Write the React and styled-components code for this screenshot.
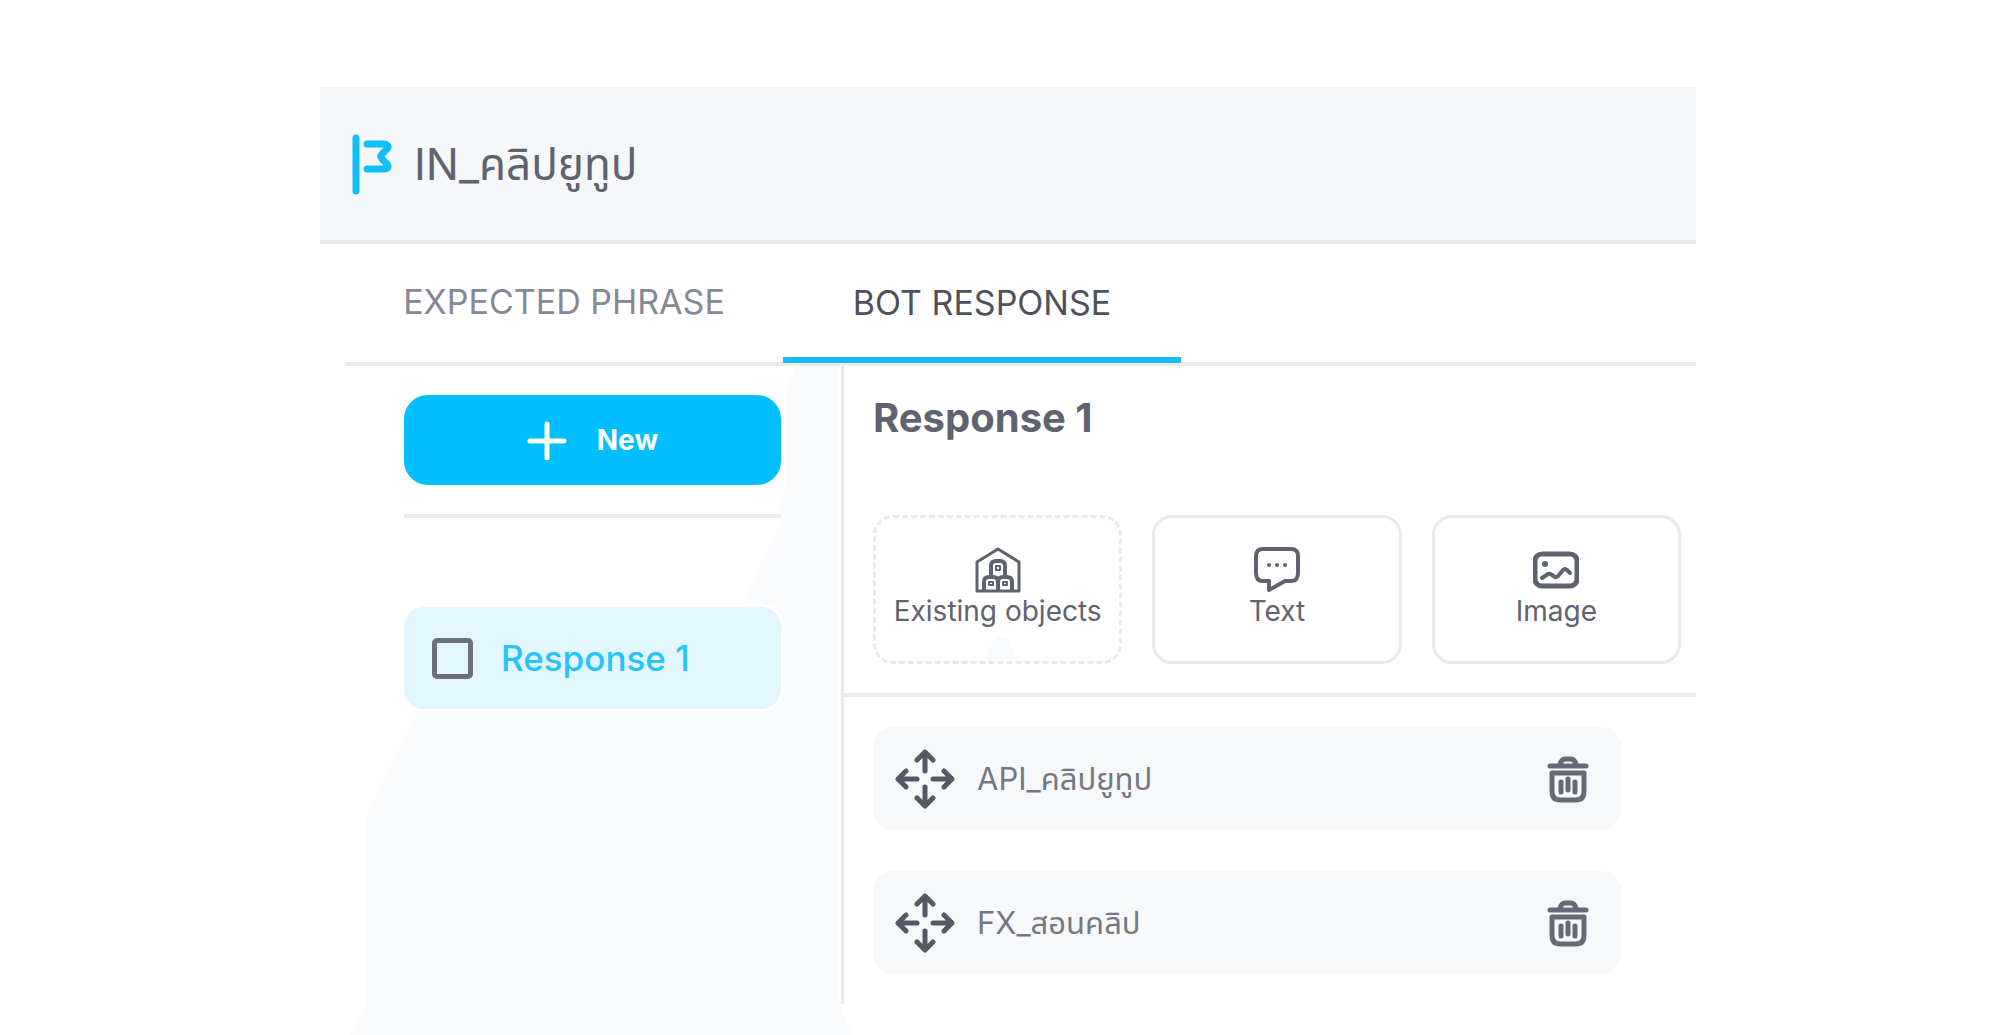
import styled, { createGlobalStyle } from "styled-components";

const actions = [
  { name: "Existing objects", icon: "store", dashed: true },
  { name: "Text", icon: "chat" },
  { name: "Image", icon: "image" },
];

const objects = ["API_คลิปยูทูป", "FX_สอนคลิป"];

const FlagIcon = () => (
  <svg width="44" height="66" viewBox="0 0 44 66" fill="none" stroke="#0fbefb" strokeWidth="7" strokeLinecap="round" strokeLinejoin="round" aria-hidden="true">
    <path d="M6 7V60" />
    <path d="M17 13H33C38 13 39 16 37 18L33 22C30 25 30 26 33 29L37 33C39 36 38 38 33 38H17" />
  </svg>
);

const PlusIcon = () => (
  <svg width="40" height="40" viewBox="0 0 40 40" stroke="#fff" strokeWidth="5" strokeLinecap="round" aria-hidden="true">
    <path d="M20 4V38M3 21H37" />
  </svg>
);

const MoveIcon = () => (
  <svg width="60" height="60" viewBox="0 0 60 60" fill="none" stroke="#555963" strokeWidth="5" strokeLinecap="round" strokeLinejoin="round" aria-hidden="true">
    <path d="M30 22V4M22 11L30 3L38 11" />
    <path d="M30 38V56M22 49L30 57L38 49" />
    <path d="M22 30H4M11 22L3 30L11 38" />
    <path d="M38 30H56M49 22L57 30L49 38" />
  </svg>
);

const TrashIcon = () => (
  <svg width="42" height="48" viewBox="0 0 42 48" fill="none" stroke="#666a76" strokeLinecap="round" strokeLinejoin="round" aria-hidden="true">
    <path d="M3 11H39" strokeWidth="5" />
    <path d="M13 10C14 5 16 4 18 4H24C26 4 28 5 29 10" strokeWidth="5" />
    <path d="M5 18H37V36C37 42 34 45 29 45H13C8 45 5 42 5 36Z" strokeWidth="5" />
    <path d="M14 27V37M21 24V35M28 27V37" strokeWidth="5" />
  </svg>
);

const icons = {
  store: (
    <svg width="46" height="46" viewBox="0 0 46 46" fill="none" stroke="#5f6370" strokeWidth="3" strokeLinejoin="round" aria-hidden="true">
      <path d="M2 44V15L23 2L44 15V44Z" />
      <path d="M16 30V19Q16 14 21 14H25Q30 14 30 19V30" strokeWidth="4" />
      <path d="M9 44V35Q9 30 14 30H18Q23 30 23 35V44M23 44V35Q23 30 28 30H32Q37 30 37 35V44" strokeWidth="4" />
      <path d="M21 19H25V23H21ZM14 35H18V38H14ZM28 35H32V38H28Z" strokeWidth="2" />
    </svg>
  ),
  chat: (
    <svg width="46" height="46" viewBox="0 0 46 46" fill="none" stroke="#5f6370" strokeWidth="4" strokeLinejoin="round" strokeLinecap="round" aria-hidden="true">
      <path d="M9 2H37Q44 2 44 9V26Q44 34 37 34H31L15 43V34H9Q2 34 2 26V9Q2 2 9 2Z" />
      <path d="M15 18H15.1M23 18H23.1M31 18H31.1" />
    </svg>
  ),
  image: (
    <svg width="46" height="46" viewBox="0 0 46 46" fill="none" stroke="#5f6370" strokeWidth="4" strokeLinejoin="round" strokeLinecap="round" aria-hidden="true">
      <rect x="2" y="7" width="42" height="32" rx="7" strokeWidth="5" />
      <path d="M9 31L15 27Q17 26 19 28L22 30Q24 31 26 28L30 23Q32 21 34 23L37 26" />
      <circle cx="12" cy="17" r="2" fill="#5f6370" strokeWidth="2" />
    </svg>
  ),
};

const App = () => {
  return (
    <>
      <GlobalStyle />
      <Page>
        <Header>
          <FlagIcon />
          <Title>IN_คลิปยูทูป</Title>
        </Header>
        <Workspace>
          <Tabs role="tablist">
            <Tab role="tab" aria-selected="false">EXPECTED PHRASE</Tab>
            <Tab role="tab" aria-selected="true" $active>BOT RESPONSE</Tab>
          </Tabs>
          <Columns>
            <Sidebar>
              <Backdrop viewBox="0 0 510 669" aria-hidden="true">
                <path d="M452 0L440 28V126L430 146V152L437 154L397 237V300H100L73 345L21 450V637L5 669H507L494 637V0Z" fill="#fafbfd" />
              </Backdrop>
              <NewButton>
                <PlusIcon />
                New
              </NewButton>
              <Divider />
              <ResponseItem>
                <Checkbox type="checkbox" />
                Response 1
              </ResponseItem>
            </Sidebar>
            <Content>
              <ContentTop>
                <Heading>Response 1</Heading>
                <Actions>
                  {actions.map(({ name, icon, dashed }) => (
                    <Action key={name} $dashed={dashed}>
                      {icons[icon]}
                      {name}
                      {dashed && (
                        <Notch width="34" height="24" viewBox="0 0 34 24" aria-hidden="true">
                          <path d="M11 0H23L34 24H0Z" fill="#f9fafc" />
                        </Notch>
                      )}
                    </Action>
                  ))}
                </Actions>
              </ContentTop>
              <ObjectList>
                {objects.map((name) => (
                  <ObjectRow key={name}>
                    <IconButton aria-label={`Move ${name}`}><MoveIcon /></IconButton>
                    <ObjectName>{name}</ObjectName>
                    <IconButton aria-label={`Delete ${name}`}><TrashIcon /></IconButton>
                  </ObjectRow>
                ))}
              </ObjectList>
            </Content>
          </Columns>
        </Workspace>
      </Page>
    </>
  );
};

export default App;

const GlobalStyle = createGlobalStyle`
  * {
    box-sizing: border-box;
  }
  body {
    margin: 0;
    background: #fff;
    color: #5f6370;
    font-family: Inter, "Noto Sans Thai", "Noto Sans", sans-serif;
  }
  button {
    font-family: inherit;
    color: inherit;
    cursor: pointer;
  }
`;

const Page = styled.main`
  max-width: 1376px;
  margin: 0 auto;
  padding: 87px 0 32px;
`;

const Header = styled.header`
  display: flex;
  align-items: center;
  gap: 20px;
  height: 157px;
  padding: 0 30px;
  background: #f6f7f9;
  border-bottom: 4px solid #e8eaec;
`;

const Title = styled.h1`
  margin: 0;
  font-size: 44px;
  line-height: 60px;
  font-weight: 400;
`;

const Workspace = styled.section`
  margin-left: 25px;
`;

const Tabs = styled.div`
  display: flex;
  height: 122px;
  border-bottom: 4px solid #ebeced;
`;

const Tab = styled.button`
  flex: 0 0 ${({ $active }) => ($active ? "398px" : "438px")};
  margin-bottom: ${({ $active }) => ($active ? "-1px" : "0")};
  padding: 4px 0 0;
  border: 0;
  border-bottom: 6px solid ${({ $active }) => ($active ? "#12bdf8" : "transparent")};
  background: none;
  font-size: 34px;
  line-height: 40px;
  && {
    color: ${({ $active }) => ($active ? "#4d515c" : "#858994")};
  }
`;

const Columns = styled.div`
  display: flex;
  min-height: 637px;
`;

const Sidebar = styled.aside`
  position: relative;
  flex: 0 0 499px;
  padding: 29px 60px 28px 59px;
  border-right: 3px solid #e8eaec;
`;

const Backdrop = styled.svg`
  position: absolute;
  z-index: -1;
  top: 0;
  left: 0;
  width: 510px;
`;

const NewButton = styled.button`
  display: flex;
  align-items: center;
  justify-content: center;
  gap: 30px;
  width: 100%;
  height: 90px;
  border: 0;
  border-radius: 24px;
  background: #00bfff;
  font-size: 28px;
  font-weight: 700;
  && {
    color: #fff;
  }
`;

const Divider = styled.hr`
  height: 4px;
  margin: 29px 0 89px;
  border: 0;
  background: #ebeced;
`;

const ResponseItem = styled.label`
  display: flex;
  align-items: center;
  gap: 28px;
  height: 102px;
  padding: 0 28px;
  border-radius: 20px;
  background: #e1f6fe;
  box-shadow: 0 0 0 3px #fff;
  color: #28c3fa;
  font-size: 35px;
  font-weight: 500;
`;

const Checkbox = styled.input`
  appearance: none;
  width: 41px;
  height: 41px;
  margin: 0;
  border: 5px solid #6b6f7b;
  border-radius: 5px;
`;

const Content = styled.div`
  flex: 1;
  min-width: 0;
`;

const ContentTop = styled.div`
  padding: 28px 15px 29px 29px;
  border-bottom: 4px solid #ebeced;
`;

const Heading = styled.h2`
  margin: 0 0 73px;
  font-size: 40px;
  line-height: 48px;
  font-weight: 700;
`;

const Actions = styled.div`
  display: grid;
  grid-template-columns: repeat(3, 1fr);
  gap: 30px;
`;

const Action = styled.button`
  position: relative;
  display: flex;
  flex-direction: column;
  align-items: center;
  height: 149px;
  padding: 29px 0 0;
  border: 3px ${({ $dashed }) => ($dashed ? "dashed" : "solid")} #e8eaec;
  border-radius: 20px;
  background: #fff;
  font-size: 28px;
  line-height: 36px;
  white-space: nowrap;
`;

const Notch = styled.svg`
  position: absolute;
  bottom: 0;
  left: calc(50% - 14px);
`;

const ObjectList = styled.div`
  display: flex;
  flex-direction: column;
  gap: 41px;
  padding: 30px 75px 30px 29px;
`;

const ObjectRow = styled.div`
  display: flex;
  align-items: center;
  gap: 22px;
  height: 103px;
  padding: 0 32px 0 22px;
  border-radius: 20px;
  background: #f7f8fa;
`;

const ObjectName = styled.span`
  flex: 1;
  color: #747883;
  font-size: 31px;
  line-height: 44px;
`;

const IconButton = styled.button`
  display: flex;
  padding: 0;
  border: 0;
  background: none;
`;
